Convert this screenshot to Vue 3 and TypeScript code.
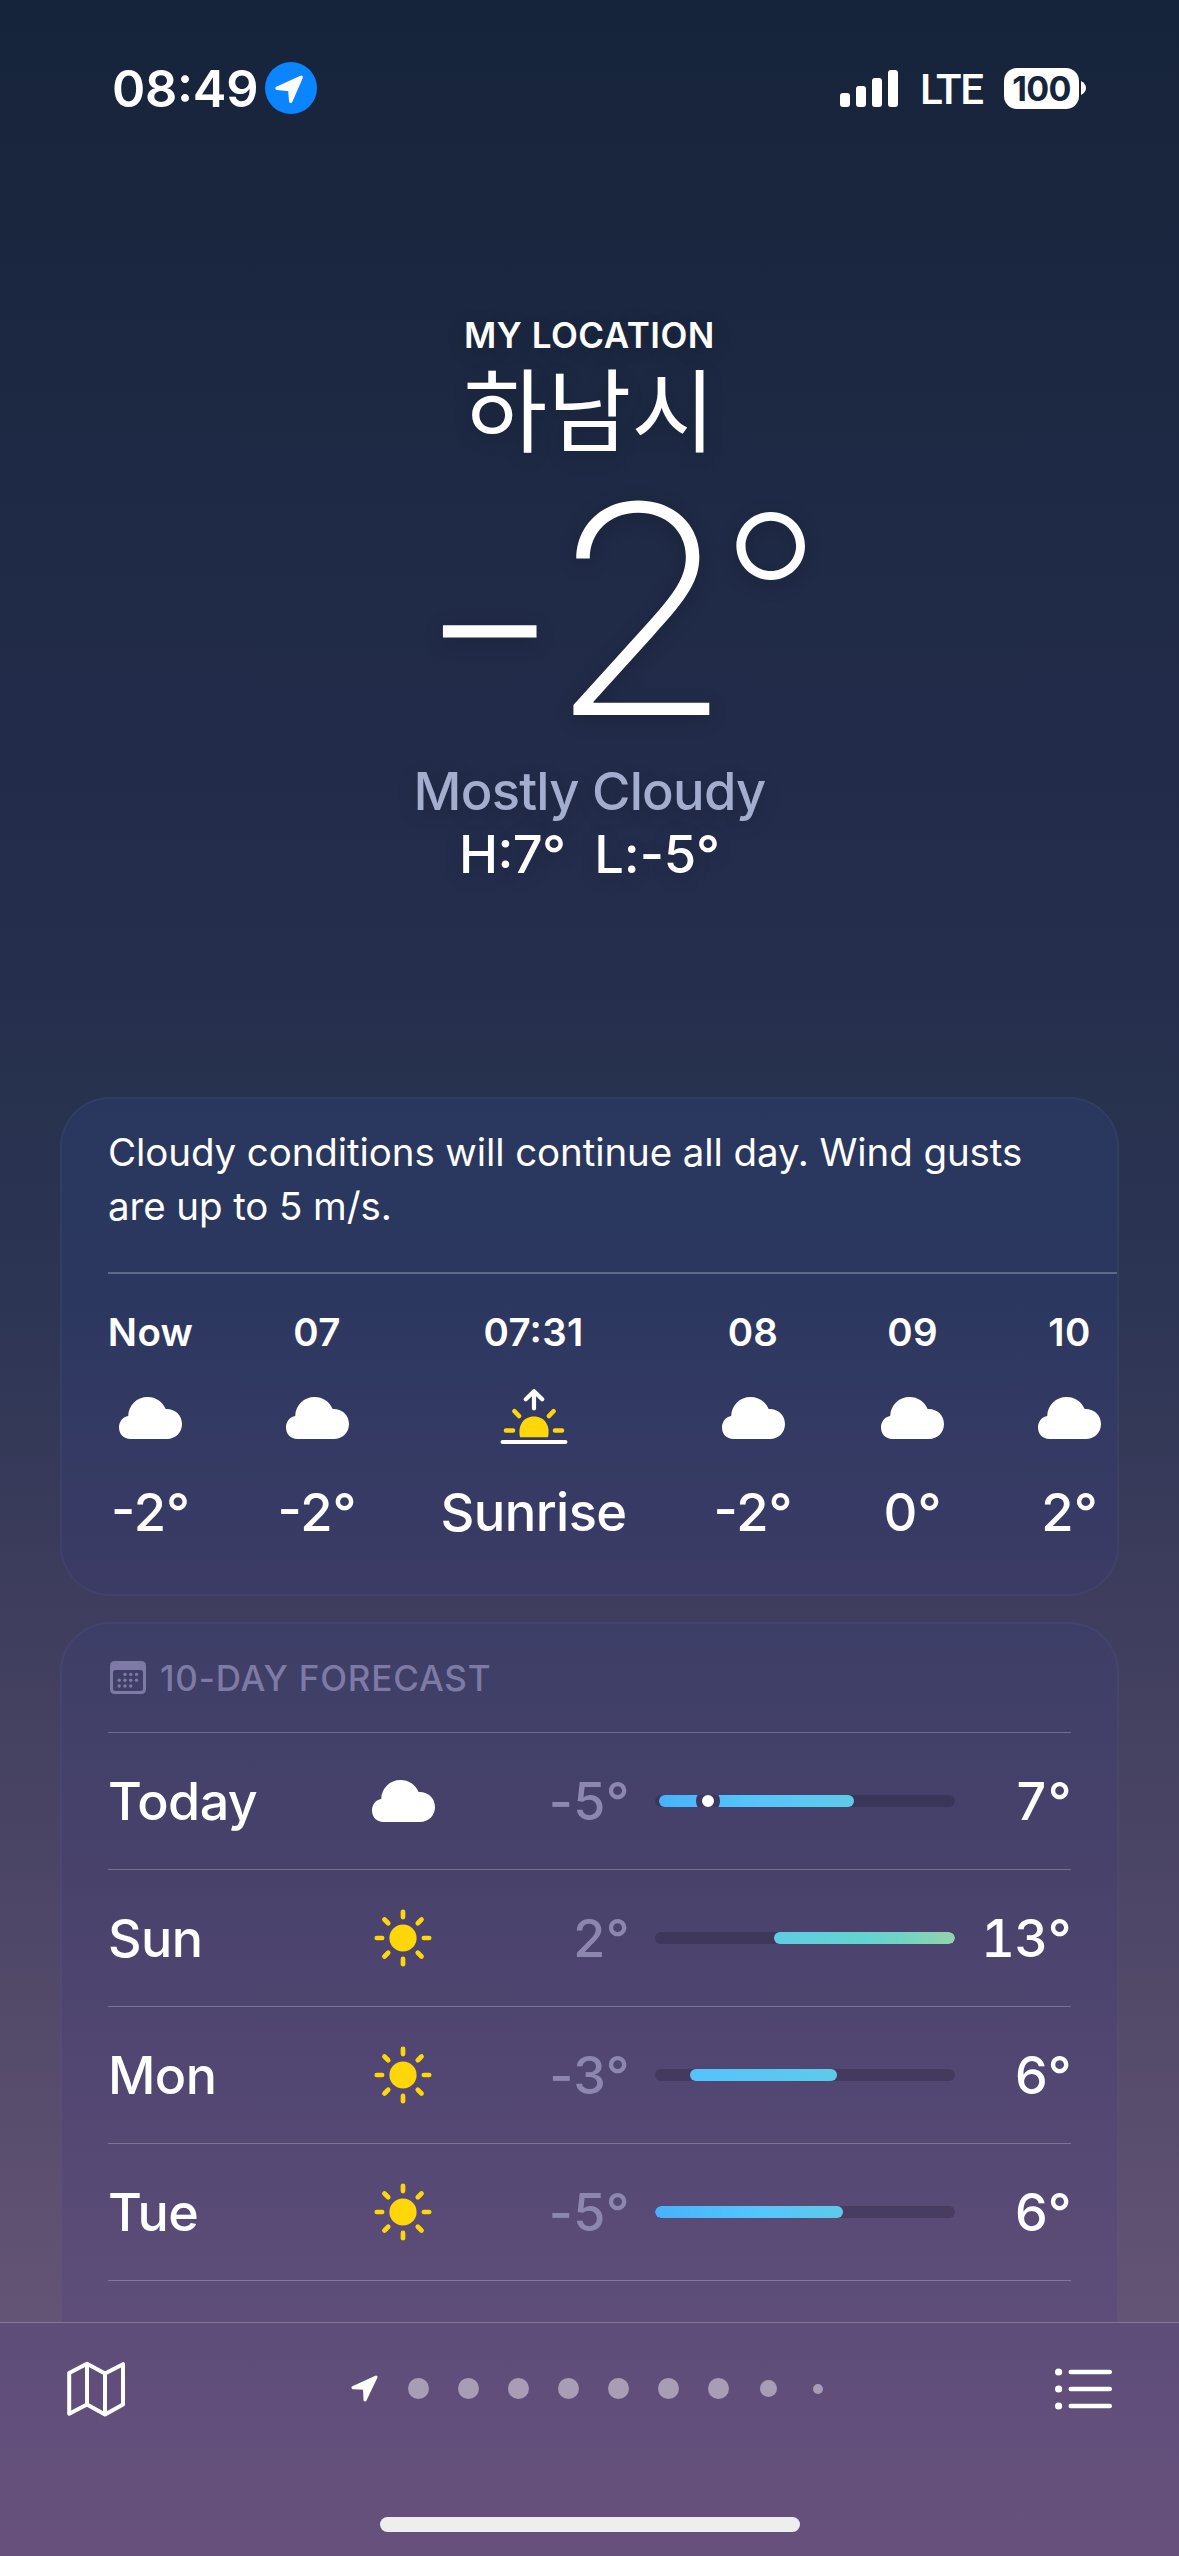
<script setup lang="ts">
interface Hour {
  time: string
  icon: 'cloud' | 'sunrise'
  value: string
  width: number
}

interface Day {
  name: string
  icon: 'cloud' | 'sun'
  low: string
  high: string
  start: number
  length: number
  gradient: string
  marker?: number
}

const hours: Hour[] = [
  { time: 'Now', icon: 'cloud', value: '-2°', width: 85 },
  { time: '07', icon: 'cloud', value: '-2°', width: 80 },
  { time: '07:31', icon: 'sunrise', value: 'Sunrise', width: 185 },
  { time: '08', icon: 'cloud', value: '-2°', width: 86 },
  { time: '09', icon: 'cloud', value: '0°', width: 65 },
  { time: '10', icon: 'cloud', value: '2°', width: 81 },
]

const days: Day[] = [
  { name: 'Today', icon: 'cloud', low: '-5°', high: '7°', start: 4, length: 195, gradient: 'linear-gradient(90deg, #47b2fb, #55c3fc 45%, #5ecbe9)', marker: 53 },
  { name: 'Sun', icon: 'sun', low: '2°', high: '13°', start: 119, length: 181, gradient: 'linear-gradient(90deg, #60cce2, #64d3d0 50%, #70d4c4 70%, #94d3ab)' },
  { name: 'Mon', icon: 'sun', low: '-3°', high: '6°', start: 35, length: 147, gradient: 'linear-gradient(90deg, #55c3fc, #5ecaea)' },
  { name: 'Tue', icon: 'sun', low: '-5°', high: '6°', start: 0, length: 188, gradient: 'linear-gradient(90deg, #47b2fb, #56c5fb 55%, #5ecaea)' },
]

const dots: number[] = [21, 21, 21, 21, 21, 21, 21, 17, 10]
const rays: number[] = [0, 45, 90, 135, 180, 225, 270, 315]
const calendarDots: number[][] = [
  [15, 13.4], [20.7, 13.4], [26.5, 13.4],
  [9.2, 19.2], [15, 19.2], [20.7, 19.2], [26.5, 19.2],
  [9.2, 25], [15, 25], [20.7, 25],
]
const cloudPath = 'M11.5 42C4.5 42 0 37 0 30.5C0 24.5 4 19.7 9.2 19C9.5 8 18 0 28.5 0C37 0 43.5 4.8 46.7 12C56 11.5 63 18 63 27C63 35.5 56.5 42 48 42Z'
</script>

<template>
  <div class="screen">
    <header class="status">
      <span class="clock">08:49</span>
      <svg class="locating" width="52" height="52" viewBox="0 0 52 52">
        <circle cx="26" cy="26" r="26" fill="#0a84ff" />
        <path d="M36.2 15.3L12 26.2L24.8 27.6L25.7 39.2Z" fill="#fff" stroke="#fff" stroke-width="3.4" stroke-linejoin="round" />
      </svg>
      <svg class="signal" width="58" height="37" viewBox="0 0 58 37" fill="#fff">
        <rect x="0" y="23" width="10" height="14" rx="3" />
        <rect x="16" y="16" width="10" height="21" rx="3" />
        <rect x="32" y="8" width="10" height="29" rx="3" />
        <rect x="48" y="0" width="10" height="37" rx="3" />
      </svg>
      <span class="network">LTE</span>
      <span class="battery">100</span>
      <svg class="nub" width="5" height="14" viewBox="0 0 5 14"><path d="M0 0C3 1.5 5 4 5 7C5 10 3 12.500 0 14Z" fill="#fff" /></svg>
    </header>

    <main class="content">
      <section class="summary">
        <div class="label">MY LOCATION</div>
        <h1 class="city">하남시</h1>
        <div class="temperature"><span class="minus">-</span><span class="number">2</span><span class="degree">°</span></div>
        <div class="condition">Mostly Cloudy</div>
        <div class="range"><span class="highest">H:7°</span><span class="lowest">L:-5°</span></div>
      </section>

      <section class="card hourly">
        <p class="advice">Cloudy conditions will continue all day. Wind gusts<br />are up to 5 m/s.</p>
        <div class="hours">
          <div v-for="hour in hours" :key="hour.time" class="hour" :style="{ width: hour.width + 'px' }">
            <span class="time">{{ hour.time }}</span>
            <svg v-if="hour.icon === 'cloud'" class="glyph" width="63" height="42" viewBox="0 0 63 42"><path :d="cloudPath" fill="#fff" /></svg>
            <svg v-else class="glyph" width="68" height="58" viewBox="0 0 68 58" fill="none" stroke-linecap="round" stroke-linejoin="round">
              <path d="M2.600 53H65.400M34 19.500V3M25.800 10.200L34 2.300L42.200 10.200" stroke="#fff" stroke-width="4.200" />
              <path d="M20 48.200C17.500 37 23 27.500 34 27.500C45 27.500 50.500 37 48 48.200Z" fill="#ffd60a" />
              <path d="M6 41.500H13M55 41.500H62M14.500 22.200L19 27M53.500 22.200L49 27" stroke="#ffd60a" stroke-width="4.600" />
            </svg>
            <span :class="['value', hour.icon]">{{ hour.value }}</span>
          </div>
        </div>
      </section>

      <section class="card daily">
        <div class="heading">
          <svg width="36" height="33" viewBox="0 0 36 33" fill="#7d7ba5">
            <path fill-rule="evenodd" d="M5 0H31Q36 0 36 5V28Q36 33 31 33H5Q0 33 0 28V5Q0 0 5 0ZM5.500 9Q3 9 3 11.500V27.500Q3 30 5.500 30H30.500Q33 30 33 27.500V11.500Q33 9 30.500 9Z" />
            <circle v-for="(p, i) in calendarDots" :key="i" :cx="p[0]" :cy="p[1]" r="1.700" />
          </svg>
          <span>10-DAY FORECAST</span>
        </div>
        <div v-for="day in days" :key="day.name" class="day">
          <span class="name">{{ day.name }}</span>
          <span class="sky">
            <svg v-if="day.icon === 'cloud'" class="overcast" width="63" height="42" viewBox="0 0 63 42"><path :d="cloudPath" fill="#fff" /></svg>
            <svg v-else width="58" height="58" viewBox="-29 -29 58 58">
              <circle r="13.600" fill="#ffd60a" />
              <path v-for="r in rays" :key="r" d="M0 -26.200V-20.900" :transform="`rotate(${r})`" stroke="#ffd60a" stroke-width="4.700" stroke-linecap="round" />
            </svg>
          </span>
          <span class="low">{{ day.low }}</span>
          <span class="track">
            <span class="fill" :style="{ marginLeft: day.start + 'px', width: day.length + 'px', background: day.gradient }"></span>
            <span v-if="day.marker" class="marker" :style="{ left: day.marker + 'px' }"></span>
          </span>
          <span class="high">{{ day.high }}</span>
        </div>
        <div class="day next"></div>
      </section>
    </main>

    <footer class="toolbar">
      <div class="tools">
        <svg class="map" width="58" height="56" viewBox="0 0 58 56" fill="none" stroke="#fff" stroke-width="4" stroke-linejoin="round">
          <path d="M2.200 12L20 2.700L38 12.500L56 3.200V43.500L38 53.500L20 43.500L2.200 52.700ZM20 2.700V43.500M38 12.500V53.500" />
        </svg>
        <div class="pages">
          <svg class="here" width="27" height="27" viewBox="0 0 27 27"><path d="M25 2L2 12.700L13.500 13.200L14 25Z" fill="#fff" stroke="#fff" stroke-width="3" stroke-linejoin="round" /></svg>
          <span v-for="(size, i) in dots" :key="i" class="page"><i :style="{ width: size + 'px', height: size + 'px' }"></i></span>
        </div>
        <svg class="list" width="58" height="42" viewBox="0 0 58 42" fill="#fff">
          <g v-for="y in [4, 21, 38]" :key="y">
            <circle cx="3.600" :cy="y" r="3.600" />
            <rect x="13.500" :y="y - 2.200" width="43.500" height="4.400" rx="2.200" />
          </g>
        </svg>
      </div>
      <div class="home"></div>
    </footer>
  </div>
</template>

<style>
body {
  background: #17243b;
}
</style>

<style scoped>
.screen {
  box-sizing: border-box;
  width: 1179px;
  height: 2556px;
  overflow: hidden;
  display: flex;
  flex-direction: column;
  color: #fff;
  font-family: Inter, "Noto Sans CJK KR", sans-serif;
  font-weight: 500;
  background: linear-gradient(180deg, #16243b 0, #1b2740 300px, #202b48 600px, #242d4c 900px, #27324f 1090px, #2c3554 1290px, #3e3d5d 1600px, #484363 1800px, #554b6b 2050px, #645476 2322px);
}

svg {
  display: block;
  flex: none;
}

.status {
  height: 176px;
  display: flex;
  align-items: center;
  flex: none;
}

.clock {
  width: 153px;
  margin-left: 112px;
  font-size: 50.500px;
  font-weight: 560;
  letter-spacing: -0.300px;
  font-feature-settings: "calt" 1;
  white-space: nowrap;
}

.signal {
  margin-left: 523px;
}

.network {
  width: 60px;
  margin-left: 22px;
  margin-right: 24px;
  padding-top: 2px;
  font-family: Roboto, sans-serif;
  font-size: 42px;
  font-weight: 480;
  letter-spacing: -1.500px;
  white-space: nowrap;
}

.battery {
  width: 75px;
  height: 41px;
  border-radius: 13px;
  background: #fff;
  color: #17243d;
  font-size: 34px;
  font-weight: 660;
  line-height: 41px;
  text-align: center;
  letter-spacing: -0.6px;
}

.nub {
  margin-left: 2px;
}

.content {
  height: 2146px;
  flex: none;
  overflow: hidden;
}

.summary {
  height: 921px;
  box-sizing: border-box;
  padding-top: 137px;
  text-align: center;
  text-shadow: 0 4px 20px rgba(0, 0, 0, 0.2);
}

.label {
  height: 44px;
  font-size: 35px;
  font-weight: 580;
  line-height: 44px;
  letter-spacing: 0.500px;
}

.city {
  height: 132px;
  margin: 0;
  font-family: "Noto Sans CJK KR", sans-serif;
  font-size: 91px;
  font-weight: 400;
  line-height: 97px;
  letter-spacing: 0.300px;
}

.temperature {
  height: 240px;
  display: flex;
  align-items: flex-start;
  padding-left: 417px;
  font-size: 291px;
  font-weight: 200;
  line-height: 240px;
  text-align: left;
}

.minus {
  width: 130px;
  margin-top: 7px;
  transform: scaleX(1.12);
  transform-origin: 0 50%;
}

.number {
  width: 173px;
  transform: scaleX(1.045);
  transform-origin: 0 50%;
}

.degree {
  margin-top: -14px;
  font-size: 223px;
  font-weight: 230;
}

.condition {
  margin-top: 31px;
  color: #a3aecf;
  font-size: 52.500px;
  line-height: 62px;
  letter-spacing: -0.750px;
}

.range {
  display: flex;
  justify-content: center;
  gap: 29px;
  font-size: 52.500px;
  line-height: 64px;
}

.highest {
  letter-spacing: -0.700px;
  font-feature-settings: "case" 1;
}

.lowest {
  letter-spacing: -0.100px;
}

.card {
  box-sizing: border-box;
  width: 1059px;
  margin: 0 60px;
  border: 2px solid rgba(255, 255, 255, 0.035);
  border-radius: 50px;
  background-origin: border-box;
}

.hourly {
  height: 499px;
  overflow: hidden;
  background-image: linear-gradient(180deg, #29375e 0, #2b375f 190px, #343a63 350px, #3c3b66 499px);
}

.advice {
  height: 108px;
  margin: 0;
  padding: 26px 0 39px 46px;
  font-size: 38.500px;
  font-weight: 400;
  line-height: 54px;
  letter-spacing: -0.100px;
  white-space: nowrap;
}

.hours {
  height: 300px;
  display: flex;
  gap: 84px;
  margin-left: 46px;
  border-top: 2px solid rgba(255, 255, 255, 0.25);
}

.hour {
  flex: none;
  display: flex;
  flex-direction: column;
  align-items: center;
  white-space: nowrap;
}

.time {
  height: 52px;
  margin-top: 32px;
  font-size: 38.500px;
  font-weight: 560;
  line-height: 52px;
  letter-spacing: 0.3px;
  font-feature-settings: "calt" 1;
}

.glyph {
  height: 58px;
  margin-top: 31px;
}

.value {
  margin-top: 34px;
  font-size: 52.500px;
  line-height: 62px;
}

.value.sunrise {
  letter-spacing: -0.6px;
}

.daily {
  height: 900px;
  margin-top: 26px;
  padding: 0 46px;
  background-image: linear-gradient(180deg, #3d3e67 0, #48426b 250px, #504671 420px, #5e4d79 700px);
}

.heading {
  height: 107px;
  display: flex;
  align-items: center;
  gap: 14px;
  padding: 0 0 1px 2px;
  color: #7d7ba5;
  font-size: 35px;
  line-height: 106px;
  letter-spacing: 0.800px;
}

.day {
  height: 136px;
  display: flex;
  align-items: center;
  border-top: 1px solid rgba(255, 255, 255, 0.24);
  font-size: 52px;
  white-space: nowrap;
}

.name {
  width: 249px;
  letter-spacing: -0.600px;
}

.sky {
  width: 91px;
  display: flex;
  justify-content: center;
}

.overcast {
  margin-left: 2px;
}

.low {
  width: 182px;
  text-align: right;
  letter-spacing: 0.500px;
  color: #8d87b0;
}

.track {
  position: relative;
  width: 300px;
  height: 12px;
  margin-left: 25px;
  border-radius: 6px;
  overflow: hidden;
  background: rgba(36, 32, 52, 0.32);
}

.fill {
  display: block;
  height: 12px;
  border-radius: 6px;
}

.marker {
  position: absolute;
  top: -6px;
  width: 12px;
  height: 12px;
  margin-left: -12px;
  border: 6px solid #3c385c;
  border-radius: 50%;
  background: #fff;
}

.high {
  flex: 1;
  text-align: right;
  letter-spacing: -0.500px;
  font-feature-settings: "tnum" 1;
}

.toolbar {
  box-sizing: border-box;
  height: 234px;
  flex: none;
  border-top: 1px solid #857798;
  background: linear-gradient(180deg, #5e4d79, #67517c);
}

.tools {
  height: 131px;
  display: flex;
  align-items: center;
}

.map {
  margin-left: 67px;
}

.pages {
  display: flex;
  align-items: center;
  margin-left: 226px;
}

.here {
  margin-right: 15px;
}

.page {
  width: 50px;
  display: flex;
  justify-content: center;
}

.page i {
  border-radius: 50%;
  background: #a89db5;
}

.list {
  margin-left: 212px;
}

.home {
  width: 420px;
  height: 15px;
  margin: 63px auto 0;
  border-radius: 8px;
  background: #eee;
}
</style>
